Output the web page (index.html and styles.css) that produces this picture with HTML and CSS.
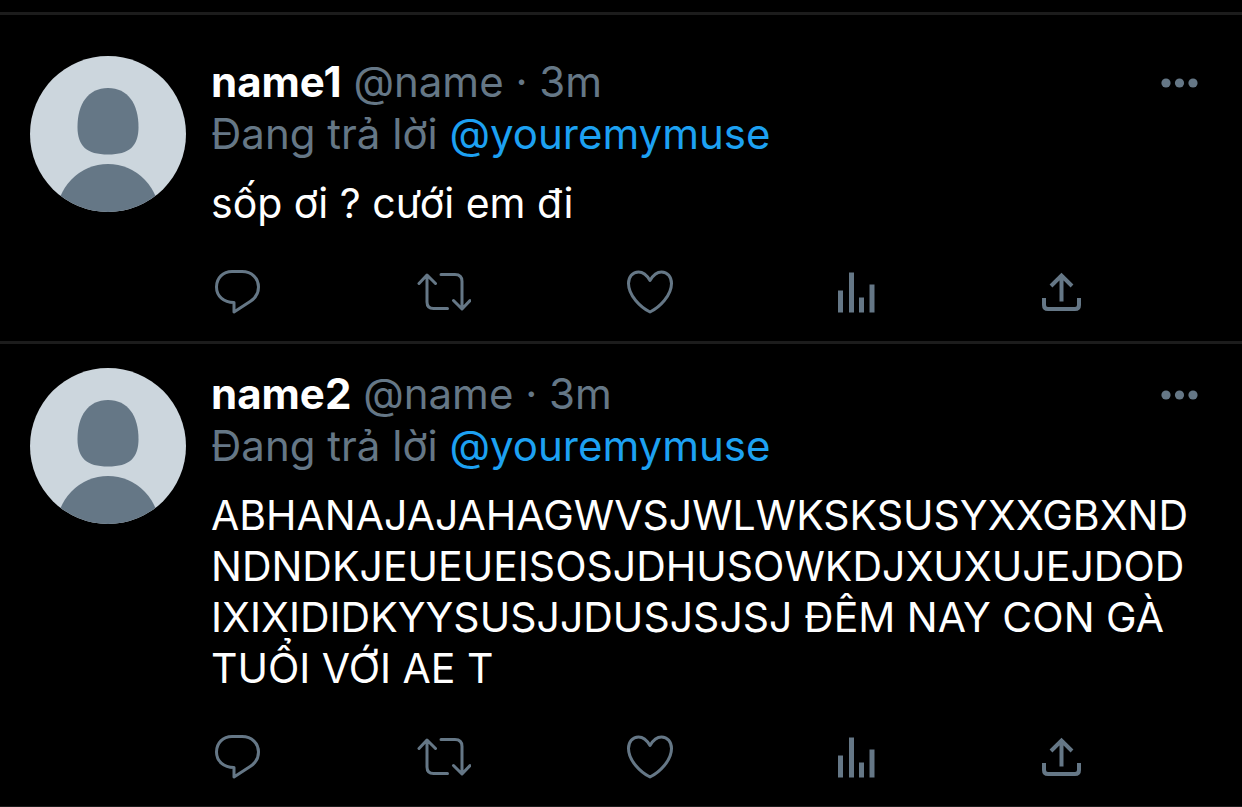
FILE: index.html
```html
<!DOCTYPE html>
<html lang="vi">
<head>
    <meta charset="UTF-8">
    <meta name="viewport" content="width=device-width, initial-scale=1.0">
    <title>Replies</title>
    <link rel="stylesheet" href="styles.css">
</head>
<body>

    <!-- Shared icons -->
    <svg class="sprite" aria-hidden="true">
        <symbol id="avatar" viewBox="0 0 156 156">
            <rect width="156" height="156" fill="#ccd6dd"/>
            <path d="M78 32c20 0 30.500 16 30.500 39 0 19-9 27.500-30.500 27.500S47.500 90 47.500 71c0-23 10.500-39 30.500-39z" fill="#657786"/>
            <ellipse cx="78" cy="162" rx="52" ry="54" fill="#657786"/>
        </symbol>
        <symbol id="more" viewBox="0 0 38 12">
            <circle cx="6" cy="7" r="4.600"/>
            <circle cx="19.500" cy="7" r="4.600"/>
            <circle cx="33" cy="7" r="4.600"/>
        </symbol>
        <symbol id="reply" viewBox="1 0 54 46">
            <path d="M22 2.500h10c10 0 16.500 7 16.500 15.500 0 6-3 11-8 14.200L24 43V33.500C13.500 33.500 6.500 27 6.500 18S13 2.500 22 2.500z"/>
        </symbol>
        <symbol id="retweet" viewBox="1 0 54 46">
            <path d="M3 14.500l8-8.500 8.500 8.500M11 7v26q0 6.500 6.500 6.500h14M25 5.500h14q7 0 7 7V39M37.500 31.500l8.500 8.500 8-8.500"/>
        </symbol>
        <symbol id="like" viewBox="0 0 54 46">
            <path d="M27 11.500C23.500 5.500 19.500 3 15.500 3 9.500 3 5.500 8 5.500 14.500c0 12 12 24 21.500 28.500C36.500 38.500 48.500 26.500 48.500 14.500c0-6.500-4-11.500-10-11.500-4 0-8 2.500-11.500 8.500z"/>
        </symbol>
        <symbol id="stats" viewBox="-1 0 54 46">
            <path d="M10.500 43.500V21.500M21.500 43.500V3.500M31.500 43.500V28.500M42 43.500V15.500" stroke-width="5" stroke-linecap="butt"/>
        </symbol>
        <symbol id="share" viewBox="1 0 54 46">
            <path d="M17 17l10.500-10.500L38 17M27.500 7v25.500M10 29v7q0 4 4 4h27q4 0 4-4v-7" stroke-width="4" stroke-linecap="butt" stroke-linejoin="miter"/>
        </symbol>
    </svg>

    <main class="timeline">
        <article class="tweet first">
            <svg class="avatar"><use href="#avatar"/></svg>
            <div class="content">
                <header class="header">
                    <div class="meta"><strong class="name">name1</strong> @name · 3m</div>
                    <button class="more" aria-label="More"><svg><use href="#more"/></svg></button>
                </header>
                <div class="replying">Đang trả lời <a href="#">@youremymuse</a></div>
                <p class="text">sốp ơi ? cưới em đi</p>
                <div class="actions">
                    <button aria-label="Reply"><svg><use href="#reply"/></svg></button>
                    <button aria-label="Retweet"><svg><use href="#retweet"/></svg></button>
                    <button aria-label="Like"><svg><use href="#like"/></svg></button>
                    <button aria-label="Stats"><svg><use href="#stats"/></svg></button>
                    <button aria-label="Share"><svg><use href="#share"/></svg></button>
                </div>
            </div>
        </article>

        <article class="tweet">
            <svg class="avatar"><use href="#avatar"/></svg>
            <div class="content">
                <header class="header">
                    <div class="meta"><strong class="name">name2</strong> @name · 3m</div>
                    <button class="more" aria-label="More"><svg><use href="#more"/></svg></button>
                </header>
                <div class="replying">Đang trả lời <a href="#">@youremymuse</a></div>
                <p class="text">ABHANAJAJAHAGWVSJWLWKSKSUSYXXGBXNDNDNDKJEUEUEISOSJDHUSOWKDJXUXUJEJDODIXIXIDIDKYYSUSJJDUSJSJSJ ĐÊM NAY CON GÀ TUỔI VỚI AE T</p>
                <div class="actions">
                    <button aria-label="Reply"><svg><use href="#reply"/></svg></button>
                    <button aria-label="Retweet"><svg><use href="#retweet"/></svg></button>
                    <button aria-label="Like"><svg><use href="#like"/></svg></button>
                    <button aria-label="Stats"><svg><use href="#stats"/></svg></button>
                    <button aria-label="Share"><svg><use href="#share"/></svg></button>
                </div>
            </div>
        </article>
    </main>

</body>
</html>
```
FILE: styles.css
```css
* {
    margin: 0;
    padding: 0;
    box-sizing: border-box;
}

body {
    background-color: #000;
    color: #fff;
    font-family: Inter, "Noto Sans", sans-serif;
    font-size: 42px;
    line-height: 52px;
}

.sprite {
    display: none;
}

.timeline {
    margin-top: 12px;
    border-top: 3px solid #1c1c1c;
}

.tweet {
    display: flex;
    gap: 25px;
    padding: 24px 44px 26px 30px;
    border-bottom: 3px solid #1c1c1c;
}

.tweet.first {
    padding-top: 41px;
}

.avatar {
    flex: none;
    width: 156px;
    height: 156px;
    border-radius: 50%;
}

.content {
    flex: 1;
    min-width: 0;
}

.header {
    display: flex;
    justify-content: space-between;
    align-items: center;
}

.meta,
.replying {
    color: #657786;
}

.name {
    color: #fff;
    font-weight: 700;
}

.replying a {
    color: #1da1f2;
    text-decoration: none;
}

.text {
    margin-top: 18px;
    padding-right: 8px;
    font-size: 41px;
    line-height: 51px;
    overflow-wrap: anywhere;
}

button {
    display: block;
    border: none;
    background: none;
    cursor: pointer;
}

button svg {
    display: block;
}

.more svg {
    width: 38px;
    height: 12px;
    fill: #657786;
}

.actions {
    display: flex;
    justify-content: space-between;
    margin-top: 40px;
    margin-right: 109px;
}

.actions svg {
    width: 54px;
    height: 46px;
    fill: none;
    stroke: #657786;
    stroke-width: 3;
    stroke-linecap: round;
    stroke-linejoin: round;
}
```
